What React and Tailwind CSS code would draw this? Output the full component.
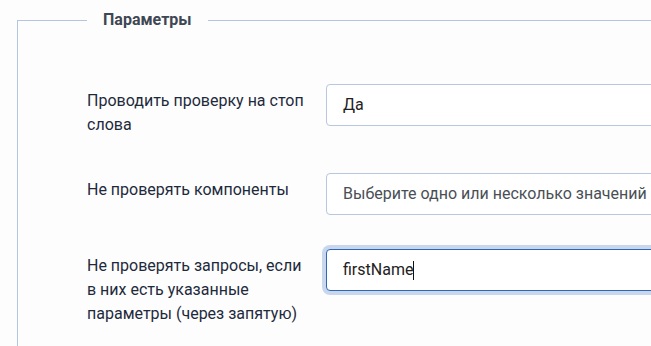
export default function App() {
  const font = { fontFamily: "Roboto, 'Noto Sans', sans-serif" };
  return (
    <div className="w-[651px] h-[346px] overflow-hidden bg-[#fdfdfd]" style={font}>
      <fieldset className="ml-[17px] mt-[8px] w-[700px] min-h-[400px] border-t border-l border-[#b4c6df] pl-[69px] pt-[52px]">
        <legend className="px-4 text-[16px] leading-6 font-bold text-[#3e4753]">Параметры</legend>

        <div className="flex items-start mb-[36px]">
          <div className="w-[219px] mr-[20px] pt-[5px] text-[16px] leading-6 text-[#1d2a3c]">
            Проводить проверку на стоп слова
          </div>
          <div className="flex-1 h-[42px] rounded-[4px] border border-[#b8c6df] bg-white flex items-center px-4 text-[16px] text-[#222]">
            Да
          </div>
        </div>

        <div className="flex items-start mb-[34px]">
          <div className="w-[219px] mr-[20px] pt-[5px] text-[16px] leading-6 text-[#1d2a3c]">
            Не проверять компоненты
          </div>
          <div className="flex-1 h-[42px] rounded-[4px] border border-[#b8c6df] bg-white flex items-center px-4 text-[16px] text-[#4a4f56]">
            Выберите одно или несколько значений
          </div>
        </div>

        <div className="flex items-start">
          <div className="w-[219px] mr-[20px] pt-[5px] text-[16px] leading-6 text-[#1d2a3c]">
            Не проверять запросы, если в них есть указанные параметры (через запятую)
          </div>
          <div className="flex-1 h-[42px] rounded-[4px] border border-[#2f66b6] bg-white flex items-center px-4 text-[16px] text-[#222] shadow-[0_0_0_4px_#c8d7ee]">
            <span>firstName</span>
            <span className="inline-block w-px h-[19px] bg-[#111]" />
          </div>
        </div>
      </fieldset>
    </div>
  );
}
